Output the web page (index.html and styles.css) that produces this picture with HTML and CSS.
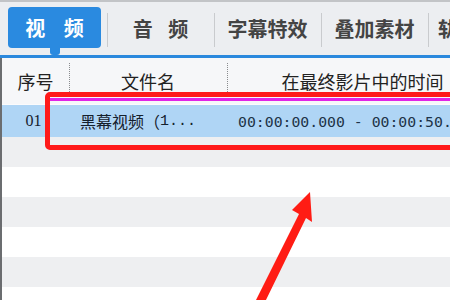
FILE: index.html
```html
<!DOCTYPE html>
<html lang="zh">
<head>
<meta charset="utf-8">
<link rel="stylesheet" href="styles.css">
</head>
<body>
<div class="app">
  <div class="toolbar">
    <div class="tab active"><span class="tab-box">视 频</span></div>
    <div class="tab">音 频</div>
    <div class="tab">字幕特效</div>
    <div class="tab">叠加素材</div>
    <div class="tab last">轨道</div>
  </div>
  <div class="table">
    <div class="row head">
      <div class="c1">序号</div>
      <div class="c2">文件名</div>
      <div class="c3">在最终影片中的时间</div>
    </div>
    <div class="row sel">
      <div class="c1 num">01</div>
      <div class="c2 name">黑幕视频（<span class="mono">1...</span></div>
      <div class="c3 time">00:00:00.000 - 00:00:50.000</div>
    </div>
    <div class="row odd"></div>
    <div class="row"></div>
    <div class="row odd"></div>
    <div class="row"></div>
    <div class="row odd"></div>
    <div class="row"></div>
  </div>
  <div class="mark"></div>
  <svg class="arrow" width="120" height="120" viewBox="0 0 120 120">
    <polygon fill="#ff1c14" points="88,0 90,30 84,26 42,112 34,108 77,22 70,18"/>
  </svg>
</div>
</body>
</html>
```

FILE: styles.css
```css
* { box-sizing: border-box; margin: 0; padding: 0; }
html, body { width: 450px; height: 300px; overflow: hidden; background: #fff; }
body { font-family: "Noto Sans CJK SC", "Noto Sans", sans-serif; }
.app { position: relative; width: 450px; height: 300px; overflow: hidden; }

.toolbar {
  height: 58px;
  background: #eceef1;
  border-top: 2px solid #c2c4c7;
  border-bottom: 3px solid #2a88dd;
  display: flex;
  white-space: nowrap;
}
.tab {
  flex: 0 0 107px;
  height: 100%;
  display: flex;
  align-items: center;
  justify-content: center;
  font-size: 20px;
  font-weight: 700;
  color: #444;
  position: relative;
  word-spacing: 11px;
}
.tab::before {
  content: "";
  position: absolute;
  left: 0; top: 11px;
  width: 1px; height: 34px;
  background: #c9cbce;
}
.tab.active::before { display: none; }
.tab.active { justify-content: flex-start; padding-left: 8px; align-items: flex-start; padding-top: 5px; }
.tab-box {
  position: relative;
  display: flex;
  align-items: center;
  justify-content: center;
  width: 93px;
  height: 41px;
  background: #2a8ae0;
  color: #fff;
  border-radius: 4px;
  word-spacing: 14px;
}
.tab-box::after {
  content: "";
  position: absolute;
  left: 42px; top: 40px;
  width: 10px; height: 8px;
  background: #2a8ae0;
  border-radius: 0 0 3px 3px;
}
.tab.last { justify-content: flex-start; padding-left: 10px; }

.table { border-left: 2px solid #6b6d70; height: 242px; }
.row { height: 30px; display: flex; align-items: center; }
.row.odd { background: #eeeff1; }
.row.head {
  height: 47px;
  background: #f6f7f9;
  font-size: 18px;
  color: #222;
  border-bottom: 1px solid #fbfbfc;
}
.row.sel { height: 32px; background: #afd5f5; color: #15202c; }
.c1 { flex: 0 0 67px; text-align: center; height: 100%; display: flex; align-items: center; justify-content: center; }
.c2 { flex: 0 0 158px; height: 100%; display: flex; align-items: center; }
.c3 { flex: 1 0 271px; height: 100%; display: flex; align-items: center; white-space: nowrap; }
.head .c2, .head .c3 { justify-content: center; position: relative; }
.head .c2::before, .head .c3::before {
  content: "";
  position: absolute;
  left: 0; top: 5px; bottom: 10px;
  border-left: 1px dotted #8a8c8f;
}
.num { font-family: "Liberation Serif", serif; font-size: 16px; padding-right: 4px; }
.name { padding-left: 11px; font-size: 16px; white-space: nowrap; }
.mono { font-family: "Liberation Mono", monospace; font-size: 15px; }
.time { padding-left: 11px; font-family: "DejaVu Sans Mono", monospace; font-size: 14.8px; color: #1d3347; }

.mark {
  position: absolute;
  left: 45px; top: 92px;
  width: 420px; height: 58px;
  border: 5px solid #ff1a1a;
  border-radius: 5px;
}
.mark::before {
  content: "";
  position: absolute;
  left: 0; right: 0; top: 1px;
  height: 3px;
  background: #e024e6;
}
.arrow { position: absolute; left: 222px; top: 192px; }
```
